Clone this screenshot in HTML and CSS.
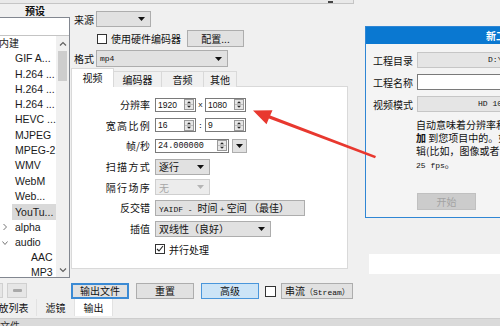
FILE: index.html
```html
<!DOCTYPE html>
<html lang="zh-CN">
<head>
  <meta charset="UTF-8" />
  <title>Shotcut - 输出</title>
  <link rel="stylesheet" href="styles.css">
</head>
<body>
  <div class="window">
    <div class="topbar"><span class="topbar-mark"></span></div>

    <div class="main">
      <!-- 预设列表 -->
      <aside class="presets">
        <div class="presets-title">预设</div>
        <div class="preset-box">
          <div class="preset-search"></div>
          <div class="preset-tree">
            <ul class="tree">
              <li class="lvl0"><span>内建</span></li>
              <li class="lvl1"><span>GIF A...</span></li>
              <li class="lvl1"><span>H.264 ...</span></li>
              <li class="lvl1"><span>H.264 ...</span></li>
              <li class="lvl1"><span>H.264 ...</span></li>
              <li class="lvl1"><span>HEVC ...</span></li>
              <li class="lvl1"><span>MJPEG</span></li>
              <li class="lvl1"><span>MPEG-2</span></li>
              <li class="lvl1"><span>WMV</span></li>
              <li class="lvl1"><span>WebM</span></li>
              <li class="lvl1"><span>Web...</span></li>
              <li class="lvl1 selected"><span>YouTu...</span></li>
              <li class="lvl1 branch">
                <svg class="chev" viewBox="0 0 6 8"><path d="M1.5 1l3 3-3 3" /></svg>
                <span>alpha</span>
              </li>
              <li class="lvl1 branch">
                <svg class="chev" viewBox="0 0 6 8"><path d="M0.5 2.5l2.5 3 2.5-3" /></svg>
                <span>audio</span>
              </li>
              <li class="lvl2"><span>AAC</span></li>
              <li class="lvl2"><span>MP3</span></li>
            </ul>
            <div class="scrollbar">
              <svg class="sb-arrow" viewBox="0 0 8 6"><path d="M1 4.5l3-3 3 3" /></svg>
              <span class="sb-thumb"></span>
              <span class="sb-space"></span>
              <svg class="sb-arrow" viewBox="0 0 8 6"><path d="M1 1.5l3 3 3-3" /></svg>
            </div>
          </div>
        </div>
        <div class="preset-buttons">
          <button class="btn tiny">+</button>
          <button class="btn tiny"><span class="dash"></span></button>
        </div>
      </aside>

      <!-- 输出设置 -->
      <section class="output">
        <div class="field-row src-row">
          <span class="lbl">来源</span>
          <div class="combo w55"><span></span><svg class="caret" viewBox="0 0 7 4"><path d="M0 0h7L3.5 4z" /></svg></div>
        </div>
        <div class="field-row hw-row">
          <span class="check"></span>
          <span class="check-text">使用硬件编码器</span>
          <button class="btn config">配置...</button>
        </div>
        <div class="field-row fmt-row">
          <span class="lbl">格式</span>
          <div class="combo w132"><span class="mono">mp4</span><svg class="caret" viewBox="0 0 7 4"><path d="M0 0h7L3.5 4z" /></svg></div>
        </div>

        <div class="tabs">
          <div class="tab active t42">视频</div>
          <div class="tab t48">编码器</div>
          <div class="tab t42">音频</div>
          <div class="tab t33">其他</div>
        </div>
        <div class="tab-panel">
          <div class="settings">
            <span class="s-lbl">分辨率</span>
            <div class="ctl">
              <div class="spin"><span class="num">1920</span><svg class="spinner" viewBox="0 0 10 11"><rect x=".5" y=".5" width="9" height="10" /><path class="mid" d="M1 5.5h8" /><path class="tri" d="M3 4.2h4L5 2.2z M3 6.8h4L5 8.8z" /></svg></div>
              <span class="sep mono">x</span>
              <div class="spin"><span class="num">1080</span><svg class="spinner" viewBox="0 0 10 11"><rect x=".5" y=".5" width="9" height="10" /><path class="mid" d="M1 5.5h8" /><path class="tri" d="M3 4.2h4L5 2.2z M3 6.8h4L5 8.8z" /></svg></div>
            </div>

            <span class="s-lbl wide-lbl">宽高比例</span>
            <div class="ctl">
              <div class="spin"><span class="num">16</span><svg class="spinner" viewBox="0 0 10 11"><rect x=".5" y=".5" width="9" height="10" /><path class="mid" d="M1 5.5h8" /><path class="tri" d="M3 4.2h4L5 2.2z M3 6.8h4L5 8.8z" /></svg></div>
              <span class="sep mono">:</span>
              <div class="spin"><span class="num">9</span><svg class="spinner" viewBox="0 0 10 11"><rect x=".5" y=".5" width="9" height="10" /><path class="mid" d="M1 5.5h8" /><path class="tri" d="M3 4.2h4L5 2.2z M3 6.8h4L5 8.8z" /></svg></div>
            </div>

            <span class="s-lbl">帧/秒</span>
            <div class="ctl">
              <div class="spin wide"><span class="num mono">24.000000</span><svg class="spinner" viewBox="0 0 10 11"><rect x=".5" y=".5" width="9" height="10" /><path class="mid" d="M1 5.5h8" /><path class="tri" d="M3 4.2h4L5 2.2z M3 6.8h4L5 8.8z" /></svg></div>
              <div class="drop-btn"><svg class="caret" viewBox="0 0 7 4"><path d="M0 0h7L3.5 4z" /></svg></div>
            </div>

            <span class="s-lbl wide-lbl">扫描方式</span>
            <div class="ctl">
              <div class="combo w55"><span>逐行</span><svg class="caret" viewBox="0 0 7 4"><path d="M0 0h7L3.5 4z" /></svg></div>
            </div>

            <span class="s-lbl wide-lbl">隔行场序</span>
            <div class="ctl">
              <div class="combo w55 disabled"><span>无</span><svg class="caret" viewBox="0 0 7 4"><path d="M0 0h7L3.5 4z" /></svg></div>
            </div>

            <span class="s-lbl">反交错</span>
            <div class="ctl">
              <div class="combo w150"><span><span class="mono">YAIDF - </span>时间 <span class="mono">+</span> 空间 （最佳）</span></div>
            </div>

            <span class="s-lbl">插值</span>
            <div class="ctl">
              <div class="combo w116"><span>双线性（良好）</span><svg class="caret" viewBox="0 0 7 4"><path d="M0 0h7L3.5 4z" /></svg></div>
            </div>

            <span></span>
            <div class="ctl">
              <span class="check checked"><svg viewBox="0 0 8 8"><path d="M1 4l2 2 4-5" /></svg></span>
              <span class="check-text">并行处理</span>
            </div>
          </div>
        </div>

        <div class="actions">
          <button class="btn w58 default">输出文件</button>
          <button class="btn w58">重置</button>
          <button class="btn w58 hot">高级</button>
          <span class="check"></span>
          <button class="btn stream">串流<span class="mono">（Stream）</span></button>
        </div>
      </section>

      <!-- 新工程 对话框 -->
      <aside class="side">
        <div class="dialog">
          <div class="dialog-title">新工程</div>
          <div class="dialog-body">
            <div class="dialog-grid">
              <span>工程目录</span>
              <div class="d-input dir mono">D:\Videos\Shotcut</div>
              <span>工程名称</span>
              <div class="d-input edit"></div>
              <span>视频模式</span>
              <div class="d-input mode mono">HD 1080p 25 fps</div>
            </div>
            <div class="d-note">
              <div>自动意味着分辨率和帧率会基于第一个添</div>
              <div><b>加</b> 到您项目中的。如果第一个文件不是视频文件</div>
              <div>辑(比如，图像或者音频文件)，那么默认为</div>
              <div><span class="mono">25 fps</span>。</div>
            </div>
            <button class="d-start">开始</button>
          </div>
        </div>
        <div class="side-blank"></div>
      </aside>
    </div>

    <nav class="dock-tabs">
      <div class="dock-tab w56">播放列表</div>
      <div class="dock-tab w38">滤镜</div>
      <div class="dock-tab w38 active">输出</div>
    </nav>
    <div class="statusbar">文件</div>

    <!-- 标注箭头 -->
    <svg class="callout" viewBox="0 0 500 326">
      <path d="M253 110.5 L272.5 110.2 L270.2 115.6 L376 156 L375 158.2 L268.9 118.4 L266.5 124.2 Z" />
    </svg>
  </div>
</body>
</html>
```

FILE: styles.css
```css
* {
  box-sizing: border-box;
}

body {
  margin: 0;
  background: #f0f0f0;
  font-family: "Noto Sans CJK SC", "Liberation Sans", sans-serif;
  font-size: 10px;
  color: #111;
}

.window {
  position: relative;
  width: 500px;
  height: 326px;
  overflow: hidden;
  display: flex;
  flex-direction: column;
}

.mono {
  font-family: "Liberation Mono", "Noto Sans CJK SC", monospace;
  font-size: 8px;
}

.topbar {
  height: 4px;
  width: 354px;
  background: #e9e9e9;
  border-right: 1px solid #c5c5c5;
  border-bottom: 1px solid #c5c5c5;
  display: flex;
  justify-content: flex-end;
  padding-right: 20px;
  flex: none;
}

.topbar-mark {
  width: 5px;
  height: 2px;
  background: #444;
  margin-top: 1px;
}

.main {
  display: flex;
  height: 295px;
  flex: none;
}

/* 预设 */
.presets {
  width: 70px;
  flex: none;
  display: flex;
  flex-direction: column;
}

.presets-title {
  height: 13px;
  line-height: 13px;
  text-align: center;
  font-weight: bold;
}

.preset-box {
  margin-left: -1px;
  width: 71px;
  height: 261px;
  border: 1px solid #828790;
  background: #fff;
  display: flex;
  flex-direction: column;
}

.preset-search {
  height: 18px;
  flex: none;
  border-bottom: 1px solid #c4c4c4;
}

.preset-tree {
  flex: 1;
  display: flex;
  min-height: 0;
  overflow: hidden;
}

.tree {
  list-style: none;
  margin: 0;
  padding: 0;
  flex: 1;
  overflow: hidden;
  font-family: "Liberation Sans", "Noto Sans CJK SC", sans-serif;
  font-size: 10.5px;
  color: #1a1a1a;
}

.tree li {
  height: 15.3px;
  line-height: 15.3px;
  white-space: nowrap;
  display: flex;
  align-items: center;
}

.tree .lvl0 {
  margin-left: -1px;
  font-size: 10px;
}

.tree .lvl1 {
  padding-left: 15px;
}

.tree .lvl2 {
  padding-left: 31px;
}

.tree .branch {
  padding-left: 2px;
}

.tree .selected span {
  background: #d9d9d9;
  margin-left: -3px;
  padding: 0 3px;
  height: 16px;
  line-height: 16px;
}

.chev {
  width: 6px;
  height: 8px;
  margin-right: 7px;
  fill: none;
  stroke: #777;
  stroke-width: 1;
}

.scrollbar {
  width: 13px;
  flex: none;
  background: #f0f0f0;
  display: flex;
  flex-direction: column;
  align-items: center;
}

.sb-arrow {
  width: 8px;
  height: 6px;
  margin: 5px 0 4px;
  fill: none;
  stroke: #606060;
  stroke-width: 1.2;
}

.sb-thumb {
  width: 9px;
  height: 30px;
  background: #cdcdcd;
}

.sb-space {
  flex: 1;
}

.preset-buttons {
  display: flex;
  gap: 4px;
  margin: 5px 0 0 -17px;
}

/* 按钮 */
.btn {
  height: 16px;
  padding: 0;
  border: 1px solid #adadad;
  background: #e1e1e1;
  font-family: inherit;
  font-size: 10px;
  line-height: 14px;
  color: #111;
}

.btn.tiny {
  width: 20px;
  height: 15px;
  display: flex;
  align-items: center;
  justify-content: center;
  background: #e6e6e6;
  border-color: #d0d0d0;
  color: #888;
}

.dash {
  width: 9px;
  height: 3px;
  border-radius: 1px;
  background: #a9a9a9;
}

/* 输出 */
.output {
  width: 285px;
  flex: none;
  padding-left: 1px;
}

.field-row {
  display: flex;
  align-items: center;
  margin-left: 3px;
}

.lbl {
  width: 22px;
}

.src-row {
  margin-top: 7px;
  height: 16px;
}

.hw-row {
  margin-top: 3px;
  height: 17px;
}

.fmt-row {
  margin-top: 3px;
  height: 17px;
}

.combo {
  height: 16px;
  display: flex;
  align-items: center;
  justify-content: space-between;
  padding: 0 5px 0 3px;
  background: #e1e1e1;
  border: 1px solid #adadad;
  white-space: nowrap;
  overflow: hidden;
}

.fmt-row .combo {
  height: 17px;
}

.combo.disabled {
  background: #ececec;
  border-color: #cfcfcf;
  color: #a6a6a6;
}

.combo.disabled .caret {
  fill: #b5b5b5;
}

.w55 { width: 55px; }
.w116 { width: 116px; }
.w132 { width: 132px; }
.w150 { width: 150px; }

.caret {
  width: 7px;
  height: 4px;
  fill: #111;
  flex: none;
}

.check {
  width: 10px;
  height: 10px;
  border: 1px solid #333;
  background: #fff;
  flex: none;
  display: flex;
}

.check svg {
  width: 8px;
  height: 8px;
  fill: none;
  stroke: #222;
  stroke-width: 1.1;
}

.hw-row .check {
  margin-left: 23px;
}

.check-text {
  margin-left: 4px;
  white-space: nowrap;
}

.btn.config {
  width: 57px;
  height: 17px;
  margin-left: 6px;
}

.tabs {
  display: flex;
  align-items: flex-end;
  height: 19px;
  margin-top: 1px;
  position: relative;
  z-index: 1;
}

.tab {
  height: 16px;
  line-height: 15px;
  text-align: center;
  background: #f0f0f0;
  border: 1px solid #d9d9d9;
  border-bottom: none;
  margin-right: -1px;
}

.tab.active {
  height: 19px;
  line-height: 17px;
  background: #fff;
}

.t33 { width: 34px; }
.t42 { width: 43px; }
.t48 { width: 49px; }

.tab-panel {
  width: 277px;
  height: 183px;
  margin-top: -1px;
  background: #fff;
  border: 1px solid #d9d9d9;
}

.settings {
  display: grid;
  grid-template-columns: 78px auto;
  grid-auto-rows: 15px;
  column-gap: 5px;
  row-gap: 5.7px;
  align-items: center;
  padding-top: 10px;
}

.s-lbl {
  justify-self: end;
  white-space: nowrap;
}

.s-lbl.wide-lbl {
  letter-spacing: 1.3px;
  margin-right: -1px;
}

.ctl {
  display: flex;
  align-items: center;
}

.spin {
  width: 41px;
  height: 14px;
  display: flex;
  align-items: center;
  justify-content: space-between;
  padding: 0 1px 0 2px;
  background: #fff;
  border: 1px solid #7a7a7a;
}

.spin.wide {
  width: 74px;
}

.num {
  font-family: "Liberation Sans", sans-serif;
  font-size: 8.5px;
}

.num.mono {
  font-family: "Liberation Mono", monospace;
  font-size: 8.5px;
}

.spinner {
  width: 10px;
  height: 11px;
  flex: none;
}

.spinner rect {
  fill: #e6e6e6;
  stroke: #9a9a9a;
}

.spinner .mid {
  stroke: #bdbdbd;
}

.spinner .tri {
  fill: #222;
}

.sep {
  width: 9px;
  text-align: center;
}

.drop-btn {
  width: 15px;
  height: 14px;
  margin-left: 3px;
  background: #e1e1e1;
  border: 1px solid #adadad;
  display: flex;
  align-items: center;
  justify-content: center;
}

.actions {
  display: flex;
  align-items: center;
  gap: 7px;
  margin-top: 14px;
}

.w58 { width: 58px; }

.btn.default {
  border: 2px solid #3b8ad4;
  line-height: 12px;
}

.btn.hot {
  background: #cce4f7;
  border-color: #4a96db;
}

.actions .check {
  width: 11px;
  height: 11px;
  margin-left: -1px;
}

.btn.stream {
  width: 72px;
  margin-left: -2px;
  text-align: left;
  padding-left: 3px;
  white-space: nowrap;
}

/* 新工程 */
.side {
  flex: 1;
  overflow: hidden;
  padding: 22px 0 0 10px;
}

.dialog {
  width: 272px;
  border: 1px solid #2f86d4;
  background: #f4f4f4;
}

.dialog-title {
  height: 17px;
  line-height: 17px;
  text-align: center;
  background: #0a78d1;
  color: #fff;
  font-weight: bold;
}

.dialog-body {
  padding: 8px 8px 7px 7px;
}

.dialog-grid {
  display: grid;
  grid-template-columns: 44px 1fr;
  grid-auto-rows: 16px;
  row-gap: 6px;
  align-items: center;
}

.d-input {
  height: 16px;
  line-height: 14px;
  background: #e5e5e5;
  border: 1px solid #c6c6c6;
  white-space: nowrap;
  overflow: hidden;
}

.d-input.dir {
  padding-left: 70px;
}

.d-input.mode {
  padding-left: 60px;
}

.d-input.edit {
  background: #fff;
  border-color: #7a7a7a;
}

.d-note {
  margin: 6px 0 0 43px;
  line-height: 13px;
  white-space: nowrap;
}

.d-start {
  display: block;
  width: 59px;
  height: 17px;
  margin: 21px 0 0 44px;
  padding: 0;
  background: #cccccc;
  border: 1px solid #c0c0c0;
  color: #a3a3a3;
  font-family: inherit;
  font-size: 10px;
}

.side-blank {
  height: 20px;
  margin: 36px 0 0 4px;
  background: #fff;
}

/* 底部停靠标签 */
.dock-tabs {
  display: flex;
  height: 17px;
  margin-left: -19px;
  flex: none;
}

.dock-tab {
  line-height: 17px;
  text-align: center;
  border-right: 1px solid #e2e2e2;
  white-space: nowrap;
}

.dock-tab.active {
  background: #fff;
}

.w56 { width: 56px; }
.w38 { width: 38px; }

.statusbar {
  flex: 1;
  margin-top: 2px;
  background: #dadada;
  border-top: 1px solid #cdcdcd;
  line-height: 14px;
  color: #333;
}

.callout {
  position: absolute;
  left: 0;
  top: 0;
  width: 500px;
  height: 326px;
  pointer-events: none;
  fill: #e8382f;
}
```
